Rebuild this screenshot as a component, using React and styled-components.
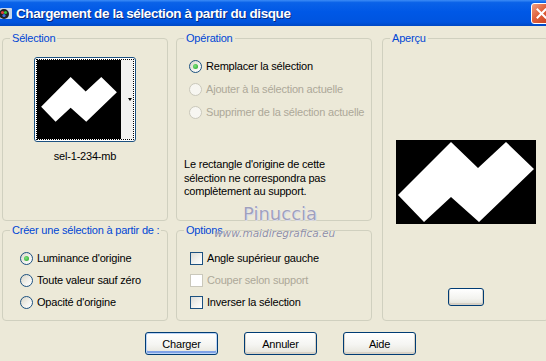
import React from "react";
import styled, { createGlobalStyle } from "styled-components";

const GlobalStyle = createGlobalStyle`
    * { box-sizing: border-box; }
    html, body {
        margin: 0;
        padding: 0;
        overflow: hidden;
        background: #ece9d8;
    }
`;

const Window = styled.div`
    position: relative;
    width: 552px;
    height: 361px;
    background: #ece9d8;
    font-family: "Liberation Sans", Arial, sans-serif;
    font-size: 11px;
    letter-spacing: -0.2px;
    color: #000;
`;

const TitleBar = styled.div`
    height: 26px;
    display: flex;
    align-items: center;
    background: linear-gradient(
        to bottom,
        #3c8cf6 0%,
        #0a62e8 10%,
        #0058e6 45%,
        #0054df 85%,
        #0048c4 100%
    );
`;

const TitleIcon = styled.svg`
    width: 15px;
    height: 15px;
    margin-left: -2px;
    flex: none;
`;

const TitleText = styled.div`
    flex: 1;
    margin-left: 3px;
    color: #fff;
    font-family: "Liberation Sans", Arial, sans-serif;
    font-weight: bold;
    font-size: 13.5px;
    letter-spacing: -0.4px;
    text-shadow: 1px 1px 0 #0a2a7a;
    white-space: nowrap;
`;

const CloseButton = styled.div`
    width: 21px;
    height: 21px;
    margin-top: 1px;
    border: 1px solid #fff;
    border-radius: 3px;
    background: linear-gradient(135deg, #f0a080 0%, #e0603c 45%, #c7401c 100%);
    display: flex;
    align-items: center;
    justify-content: center;
    flex: none;
`;

const Body = styled.div`
    padding: 12px 0 0 2px;
`;

const Panels = styled.div`
    display: grid;
    grid-template-columns: 166px 196px 169px;
    grid-template-rows: 183px 91px;
    column-gap: 8px;
    row-gap: 9px;
`;

const Group = styled.div`
    position: relative;
    border: 1px solid #d0d0bf;
    border-radius: 4px;
    padding: ${({ $pad }) => $pad || "0"};
    display: flex;
    flex-direction: column;
    align-items: ${({ $center }) => ($center ? "center" : "stretch")};
`;

const PreviewGroup = styled(Group)`
    grid-column: 3;
    grid-row: 1 / span 2;
    margin-left: 2px;
`;

const Legend = styled.span`
    position: absolute;
    top: -8px;
    left: 7px;
    padding: 0 2px;
    background: #ece9d8;
    color: #0046d5;
    line-height: 14px;
    white-space: nowrap;
`;

const ThumbBox = styled.div`
    width: 102px;
    height: 85px;
    border: 1px solid #1c5180;
    border-radius: 3px;
    background: #fff;
    padding: 1px;
`;

const FocusRing = styled.div`
    height: 100%;
    border: 1px dotted #000;
    display: flex;
`;

const BlackImage = styled.div`
    flex: 1;
    background: #000;
    display: flex;
    align-items: center;
    padding: ${({ $pad }) => $pad || "0"};

    svg {
        width: 100%;
        display: block;
    }
`;

const DropStrip = styled.div`
    width: 12px;
    background: #f2f2f0;
    display: flex;
    align-items: center;
    justify-content: flex-end;
    padding-right: 1px;

    &::after {
        content: "";
        border-left: 2px solid transparent;
        border-right: 2px solid transparent;
        border-top: 3px solid #000;
    }
`;

const FileName = styled.div`
    margin-top: 7px;
    line-height: 14px;
`;

const OptionList = styled.div`
    display: flex;
    flex-direction: column;
    gap: ${({ $gap }) => $gap}px;
`;

const OptionRow = styled.label`
    display: flex;
    align-items: center;
    height: 16px;
    gap: 4px;
    color: ${({ $disabled }) => ($disabled ? "#aca899" : "#000")};
    white-space: nowrap;
`;

const RadioMark = styled.span`
    width: 13px;
    height: 13px;
    border-radius: 50%;
    flex: none;
    border: 1px solid ${({ $disabled }) => ($disabled ? "#cac8bb" : "#1c5180")};
    background: ${({ $disabled }) =>
        $disabled ? "#f7f6f1" : "linear-gradient(135deg, #d9d6c8 0%, #f4f3ee 60%, #fff 100%)"};
    display: flex;
    align-items: center;
    justify-content: center;

    &::after {
        content: "";
        display: ${({ $checked }) => ($checked ? "block" : "none")};
        width: 5px;
        height: 5px;
        border-radius: 50%;
        background: radial-gradient(circle at 40% 40%, #7ee27e, #21a121);
    }
`;

const CheckMark = styled.span`
    width: 13px;
    height: 13px;
    flex: none;
    border: 1px solid ${({ $disabled }) => ($disabled ? "#cac8bb" : "#1c5180")};
    background: ${({ $disabled }) =>
        $disabled ? "#fff" : "linear-gradient(135deg, #dcdcd7 0%, #f4f4f0 60%, #fff 100%)"};
`;

const Note = styled.p`
    margin: 38px 0 0 -5px;
    line-height: 13.5px;
`;

const PreviewImage = styled(BlackImage)`
    flex: none;
    width: 140px;
    height: 84px;
    margin-top: 101px;
`;

const MiniButton = styled.div`
    width: 36px;
    height: 18px;
    margin-top: 64px;
    border: 1px solid #003c74;
    border-radius: 3px;
    background: linear-gradient(#fff, #f3f3ef 60%, #e2e0d6);
    box-shadow: inset 0 -1px 0 1px #d6d0c5;
`;

const ButtonRow = styled.div`
    display: flex;
    gap: 26px;
    padding: 11px 0 0 143px;
`;

const PushButton = styled.button`
    width: 73px;
    height: 23px;
    padding: 0;
    border: 1px solid #003c74;
    border-radius: 3px;
    background: linear-gradient(#fff 0%, #f5f5f2 55%, #e6e4da 100%);
    box-shadow: ${({ $default }) =>
        $default
            ? "inset 0 0 0 1px #bcd4f6, inset 0 -2px 0 1px #7fa2e6"
            : "inset 0 -1px 0 1px #d8d2c6"};
    font-family: "Liberation Sans", Arial, sans-serif;
    font-size: 11px;
    letter-spacing: -0.2px;
    color: #000;
`;

const WatermarkName = styled.div`
    position: absolute;
    left: 243px;
    top: 203px;
    font-family: "DejaVu Sans", sans-serif;
    font-size: 18px;
    letter-spacing: 0;
    color: #a0a0bc;
    text-shadow: 0 0 1px #fff, 1px 1px 0 #d8d8e4;
`;

const WatermarkSite = styled.div`
    position: absolute;
    left: 214px;
    top: 227px;
    font-family: "DejaVu Sans", sans-serif;
    font-style: italic;
    font-size: 10.5px;
    letter-spacing: 0;
    color: #8e8ea4;
    text-shadow: 0 0 1px #fff;
`;

const Zigzag = () => (
    <svg viewBox="0 0 140 84" preserveAspectRatio="xMidYMid meet">
        <polygon
            points="2,55 55,2 82,28 110,2 138,29 83,82 55,57 28,82"
            fill="#fff"
        />
    </svg>
);

const Radio = ({ checked, disabled, children }) => (
    <OptionRow $disabled={disabled}>
        <RadioMark $checked={checked} $disabled={disabled} />
        {children}
    </OptionRow>
);

const Check = ({ disabled, children }) => (
    <OptionRow $disabled={disabled}>
        <CheckMark $disabled={disabled} />
        {children}
    </OptionRow>
);

const App = () => {
    return (
        <Window>
            <GlobalStyle />
            <TitleBar>
                <TitleIcon viewBox="0 0 15 15">
                    <rect x="2" y="2" width="12" height="11" rx="1" fill="#c9d7ea" />
                    <circle cx="6" cy="8" r="5" fill="#222" />
                    <circle cx="4.5" cy="6.5" r="1.6" fill="#e23b3b" />
                    <circle cx="7.5" cy="6.5" r="1.6" fill="#35c23a" />
                    <circle cx="6" cy="9.5" r="1.6" fill="#3a6ee8" />
                </TitleIcon>
                <TitleText>Chargement de la sélection à partir du disque</TitleText>
                <CloseButton>
                    <svg width="11" height="11" viewBox="0 0 11 11">
                        <path
                            d="M1.5 1.5 L9.5 9.5 M9.5 1.5 L1.5 9.5"
                            stroke="#fff"
                            strokeWidth="2"
                            strokeLinecap="square"
                        />
                    </svg>
                </CloseButton>
            </TitleBar>

            <Body>
                <Panels>
                    <Group $center $pad="18px 0 0 0">
                        <Legend>Sélection</Legend>
                        <ThumbBox>
                            <FocusRing>
                                <BlackImage $pad="0 3px">
                                    <Zigzag />
                                </BlackImage>
                                <DropStrip />
                            </FocusRing>
                        </ThumbBox>
                        <FileName>sel-1-234-mb</FileName>
                    </Group>

                    <Group $pad="19px 8px 0 12px">
                        <Legend>Opération</Legend>
                        <OptionList $gap={7}>
                            <Radio checked>Remplacer la sélection</Radio>
                            <Radio disabled>Ajouter à la sélection actuelle</Radio>
                            <Radio disabled>Supprimer de la sélection actuelle</Radio>
                        </OptionList>
                        <Note>
                            Le rectangle d'origine de cette
                            <br />
                            sélection ne correspondra pas
                            <br />
                            complètement au support.
                        </Note>
                    </Group>

                    <PreviewGroup $center>
                        <Legend>Aperçu</Legend>
                        <PreviewImage>
                            <Zigzag />
                        </PreviewImage>
                        <MiniButton />
                    </PreviewGroup>

                    <Group $pad="19px 0 0 17px">
                        <Legend>Créer une sélection à partir de :</Legend>
                        <OptionList $gap={6}>
                            <Radio checked>Luminance d'origine</Radio>
                            <Radio>Toute valeur sauf zéro</Radio>
                            <Radio>Opacité d'origine</Radio>
                        </OptionList>
                    </Group>

                    <Group $pad="19px 0 0 13px">
                        <Legend>Options</Legend>
                        <OptionList $gap={6}>
                            <Check>Angle supérieur gauche</Check>
                            <Check disabled>Couper selon support</Check>
                            <Check>Inverser la sélection</Check>
                        </OptionList>
                    </Group>
                </Panels>

                <ButtonRow>
                    <PushButton $default>Charger</PushButton>
                    <PushButton>Annuler</PushButton>
                    <PushButton>Aide</PushButton>
                </ButtonRow>
            </Body>

            <WatermarkName>Pinuccia</WatermarkName>
            <WatermarkSite>www.maidiregrafica.eu</WatermarkSite>
        </Window>
    );
};

export default App;
